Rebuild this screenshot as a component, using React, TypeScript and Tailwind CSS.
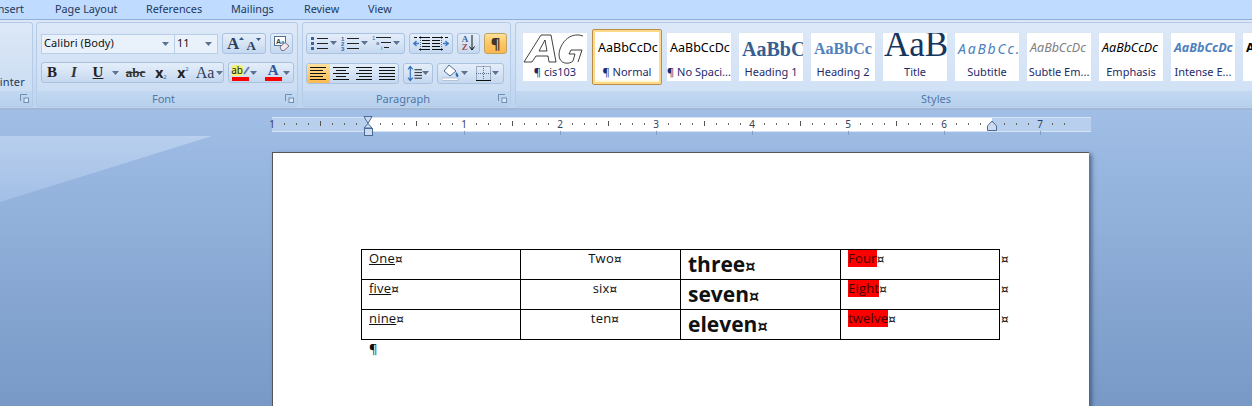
import React from "react";

const Caret = () => (
  <svg width="7" height="4" viewBox="0 0 7 4" className="shrink-0"><path d="M0 0h7L3.500 4z" fill="#5c7290" /></svg>
);

const Launcher = () => (
  <svg width="9" height="9" viewBox="0 0 9 9" className="shrink-0">
    <path d="M0.500 7V0.500H7" fill="none" stroke="#6f8db3" />
    <rect x="4" y="4" width="4.500" height="4.500" fill="#dfe9f6" stroke="#6f8db3" />
  </svg>
);

function Group({ label, width, className, children }: { label: string; width: string; className?: string; children?: React.ReactNode }) {
  return (
    <div className={`${width} ${className ?? ""} h-[85px] shrink-0 flex flex-col rounded-[3px] border border-[#b5cbe6] bg-gradient-to-b from-[#dce8f7] via-[#d3e2f5] to-[#c8dbf2] overflow-hidden`}>
      <div className="h-[68px] shrink-0">{children}</div>
      <div className="flex-1 flex items-center bg-gradient-to-b from-[#c2d8f1] to-[#b9d1ee] pl-[5px] pr-[3px]">
        <span className="flex-1 text-center text-[11px] leading-none text-[#4f78a8]">{label}</span>
        <Launcher />
      </div>
    </div>
  );
}

function BtnGroup({ width, children, className }: { width: string; children: React.ReactNode; className?: string }) {
  return (
    <div className={`${width} ${className ?? ""} h-[21px] flex items-center justify-between rounded-[3px] border border-[#a9c2e0] bg-gradient-to-b from-[#e4eefa] via-[#d6e4f5] to-[#c4d8f0] shrink-0`}>
      {children}
    </div>
  );
}

const Lines = ({ kind = "left", w = 16 }: { kind?: string; w?: number }) => {
  const rows = [2, 5, 8, 11, 14];
  const short = [0, 3, 0, 3, 0];
  return (
    <svg width={w} height="15" viewBox={`0 0 ${w} 15`} className="shrink-0">
      {rows.map((y, i) => {
        let a = 0, b = w;
        if (kind === "left") b = w - short[i];
        if (kind === "right") a = short[i];
        if (kind === "center") { a = short[i]; b = w - short[i]; }
        return <path key={y} d={`M${a} ${y - 0.5}H${b}`} stroke="#111" strokeWidth="1" />;
      })}
    </svg>
  );
};

const Bullets = () => (
  <svg width="17" height="15" viewBox="0 0 17 15">
    {[2, 7, 12].map((y) => (
      <g key={y}>
        <rect x="0" y={y - 1} width="3" height="3" fill="#3f63a0" />
        <path d={`M6 ${y + 0.5}H17`} stroke="#222" />
      </g>
    ))}
  </svg>
);

const Numbers = () => (
  <svg width="18" height="15" viewBox="0 0 18 15" className="ml-[2px]">
    {[["1", 5], ["2", 10], ["3", 15]].map(([n, y]) => (
      <g key={n as string}>
        <text x="0" y={y as number} fontSize="6" fontWeight="700" fill="#3f63a0" fontFamily="Liberation Sans">{n}</text>
        <path d={`M6 ${(y as number) - 2.500}H18`} stroke="#222" />
      </g>
    ))}
  </svg>
);

const Multi = () => (
  <svg width="19" height="16" viewBox="0 0 19 16" className="ml-[2px]">
    <text x="0" y="5" fontSize="6" fill="#3f63a0" fontFamily="Liberation Sans">1</text>
    <path d="M4 2.500H19" stroke="#222" />
    <text x="4" y="10" fontSize="6" fill="#3f63a0" fontFamily="Liberation Sans">a</text>
    <path d="M9 7.500H19" stroke="#222" />
    <text x="9" y="15" fontSize="6" fill="#3f63a0" fontFamily="Liberation Sans">i</text>
    <path d="M12 12.500H17" stroke="#222" />
  </svg>
);

const Indent = ({ flip }: { flip?: boolean }) => (
  <svg width="17" height="15" viewBox="0 0 17 15" style={flip ? { transform: "scaleX(-1)" } : undefined}>
    <path d="M1 1.500H4M6 1.500H17M9 4.500H17M9 7.500H17M9 10.500H17M6 13.500H17" stroke="#111" />
    <path d="M7.500 0V15" stroke="#5e708a" strokeDasharray="1 1" />
    <path d="M0 7.500H6M3.500 5L1 7.500L3.500 10" fill="none" stroke="#3f78c4" strokeWidth="1.400" />
  </svg>
);

const TextLabel = ({ c, children }: { c: string; children: React.ReactNode }) => (
  <span className={`font-['Liberation_Serif'] ${c}`}>{children}</span>
);

function FontGroup() {
  return (
    <Group label="Font" width="w-[262px]" className="ml-[3px]">
      <div className="flex flex-col pl-[4px] pt-[10px] gap-[8px]">
        <div className="flex items-center h-[21px]">
          <div className="w-[134px] h-[20px] flex items-center justify-between px-[2px] pr-[5px] bg-[#e9f1fb] border border-[#b9cfe9] text-[11px] tracking-[0.1px] text-[#111]">
            <span>Calibri (Body)</span>
            <Caret />
          </div>
          <div className="w-[43px] h-[20px] flex items-center justify-between pl-[2px] pr-[5px] bg-[#e9f1fb] border border-[#b9cfe9] border-l-0 text-[11px] text-[#111]">
            <span>11</span>
            <Caret />
          </div>
          <BtnGroup width="w-[44px] ml-[4px]" className="px-[4px]">
            <span className="flex items-start"><TextLabel c="text-[17px] leading-none font-bold text-[#2b3f5c]">A</TextLabel><svg width="5" height="3" viewBox="0 0 5 3" className="mt-[2px]"><path d="M0 3L2.500 0L5 3z" fill="#3b5a86" /></svg></span>
            <span className="flex items-start"><TextLabel c="text-[13px] leading-none font-bold text-[#2b3f5c] mt-[3px]">A</TextLabel><svg width="5" height="3" viewBox="0 0 5 3" className="mt-[2px]"><path d="M0 0L2.500 3L5 0z" fill="#3b5a86" /></svg></span>
          </BtnGroup>
          <BtnGroup width="w-[23px] ml-[4px]" className="justify-center">
            <svg width="17" height="17" viewBox="0 0 17 17">
              <rect x="1.500" y="1.500" width="11" height="9" fill="#fff" stroke="#55708f" />
              <text x="3" y="8.500" fontSize="7" fontWeight="700" fill="#2b3f5c" fontFamily="Liberation Sans">A</text>
              <text x="8" y="8.500" fontSize="6" fill="#2b3f5c" fontFamily="Liberation Sans">a</text>
              <path d="M7 12L12 7.500L16 11L11 15.500H8.500z" fill="#f2e8ee" stroke="#7b6f88" />
            </svg>
          </BtnGroup>
        </div>
        <div className="flex items-center h-[21px]">
          <BtnGroup width="w-[183px]" className="justify-start">
            <span className="w-[20px] flex justify-center"><TextLabel c="text-[15px] leading-none font-bold text-[#222]">B</TextLabel></span>
            <span className="w-[24px] flex justify-center"><TextLabel c="text-[15px] leading-none italic font-bold text-[#333]">I</TextLabel></span>
            <span className="w-[24px] flex justify-center"><TextLabel c="text-[15px] leading-none font-bold underline text-[#222]">U</TextLabel></span>
            <span className="w-[11px] flex justify-center"><Caret /></span>
            <span className="w-[29px] flex justify-center"><TextLabel c="text-[13px] leading-none font-bold line-through text-[#333]">abc</TextLabel></span>
            <span className="w-[22px] flex justify-center items-end"><span className="text-[14px] leading-none font-bold text-[#222]">x</span><span className="text-[6px] leading-none text-[#3f63a0]">2</span></span>
            <span className="w-[22px] flex justify-center items-start"><span className="text-[14px] leading-none font-bold text-[#222]">x</span><span className="text-[6px] leading-none text-[#3f63a0]">2</span></span>
            <span className="w-[22px] flex justify-center"><TextLabel c="text-[16px] leading-none text-[#2b3f5c]">Aa</TextLabel></span>
            <Caret />
          </BtnGroup>
          <BtnGroup width="w-[66px] ml-[4px]" className="px-[3px]">
            <span className="flex flex-col items-center w-[17px]">
              <span className="flex items-center h-[13px]">
                <span className="bg-[#f2f06e] text-[10px] leading-[11px] text-[#222] rounded-[3px]">ab</span>
                <svg width="7" height="10" viewBox="0 0 7 10"><path d="M1 8L6 1" stroke="#6a80a8" strokeWidth="2" /></svg>
              </span>
              <span className="w-[17px] h-[4px] bg-[#f00]" />
            </span>
            <Caret />
            <span className="flex flex-col items-center w-[17px] ml-[6px]">
              <TextLabel c="text-[15px] h-[13px] leading-[13px] font-bold text-[#2f5a9e]">A</TextLabel>
              <span className="w-[17px] h-[4px] bg-[#f00]" />
            </span>
            <Caret />
          </BtnGroup>
        </div>
      </div>
    </Group>
  );
}

function ParagraphGroup() {
  return (
    <Group label="Paragraph" width="w-[209px]" className="ml-[4px]">
      <div className="flex flex-col pl-[3px] pt-[9px] gap-[8px]">
        <div className="flex items-center gap-[4px] h-[22px]">
          <BtnGroup width="w-[99px]" className="px-[4px]">
            <Bullets /><Caret /><Numbers /><Caret /><Multi /><Caret />
          </BtnGroup>
          <BtnGroup width="w-[44px]" className="px-[3px]">
            <Indent /><Indent flip />
          </BtnGroup>
          <BtnGroup width="w-[23px]" className="justify-center">
            <span className="flex flex-col font-['Liberation_Serif'] text-[9px] leading-[8px] font-bold">
              <span className="text-[#3f63a0]">A</span>
              <span className="text-[#a04a4a]">Z</span>
            </span>
            <svg width="6" height="16" viewBox="0 0 6 16" className="ml-[1px]"><path d="M3 0V15M0.500 11.500L3 15L5.500 11.500" fill="none" stroke="#111" /></svg>
          </BtnGroup>
          <div className="w-[23px] h-[21px] flex items-center justify-center rounded-[3px] border border-[#c2a25f] bg-gradient-to-b from-[#fde29b] via-[#fbc662] to-[#fdb84e] text-[15px] font-bold leading-none text-[#40362a]">¶</div>
        </div>
        <div className="flex items-center gap-[4px] h-[22px]">
          <BtnGroup width="w-[93px]" className="overflow-hidden">
            <span className="w-[23px] h-full flex items-center justify-center bg-gradient-to-b from-[#fde29b] to-[#fbb94f]"><Lines kind="left" /></span>
            <span className="w-[23px] flex justify-center"><Lines kind="center" /></span>
            <span className="w-[23px] flex justify-center"><Lines kind="right" /></span>
            <span className="w-[23px] flex justify-center"><Lines kind="both" /></span>
          </BtnGroup>
          <BtnGroup width="w-[30px]" className="px-[3px]">
            <svg width="16" height="17" viewBox="0 0 16 17">
              <path d="M3.500 1V16M1 4L3.500 1L6 4M1 13L3.500 16L6 13" fill="none" stroke="#2f6cb8" strokeWidth="1.200" />
              {[4.500, 7.500, 10.500, 13.500].map((y) => <path key={y} d={`M8 ${y}H16`} stroke="#222" />)}
            </svg>
            <Caret />
          </BtnGroup>
          <BtnGroup width="w-[67px]" className="px-[4px]">
            <svg width="18" height="18" viewBox="0 0 18 18">
              <path d="M7 1L14 7L8 12L2 7z" fill="#fff" stroke="#4c6a90" />
              <path d="M14 8c2 2 3 3 2 5c-2 0-3-2-2-5z" fill="#2f6cb8" />
              <rect x="0" y="14" width="16" height="2.500" fill="#fff" stroke="#9aa8bc" strokeWidth="0.600" />
            </svg>
            <Caret />
            <svg width="15" height="15" viewBox="0 0 15 15" className="ml-[6px]">
              <rect x="0.500" y="0.500" width="14" height="14" fill="none" stroke="#5e708a" strokeDasharray="1 1" />
              <path d="M7.500 0V15M0 7.500H15" stroke="#5e708a" strokeDasharray="1 1" />
              <path d="M0 14.500H15" stroke="#111" />
            </svg>
            <Caret />
          </BtnGroup>
        </div>
      </div>
    </Group>
  );
}

function StyleCard({ sample, label, sc, selected, ml }: { sample: string; label: string; sc: string; selected?: boolean; ml: string }) {
  return (
    <div className={`${ml} shrink-0 ${selected ? "w-[70px] h-[56px] border border-[#b98d45] bg-white rounded-[2px] shadow-[inset_0_0_0_2px_#fdd98a,inset_0_-3px_2px_#ffefb4]" : "w-[64px] h-[48px] bg-white"} flex flex-col items-center overflow-hidden`}>
      <div className={`w-full h-[32px] ${selected ? "mt-[3px] px-[5px] shrink-0" : "px-[1px] shrink-0"} flex items-center overflow-hidden whitespace-nowrap`}>
        <span className={sc}>{sample}</span>
      </div>
      <span className="text-[11px] leading-[13px] whitespace-nowrap text-[#1d2a6b]">{label}</span>
    </div>
  );
}

function StylesGroup() {
  const ca = "font-['Noto_Sans']";
  return (
    <div className="ml-[4px] w-[842px] h-[85px] shrink-0 flex flex-col rounded-l-[3px] border border-[#b5cbe6] bg-gradient-to-b from-[#dce8f7] to-[#cfe0f5] overflow-hidden">
      <div className="h-[68px] shrink-0 flex items-center pl-[7px] pb-[1px]">
        <div className="w-[64px] h-[48px] bg-white shrink-0 flex flex-col items-center overflow-hidden">
          <svg width="64" height="32" viewBox="0 0 64 32" className="shrink-0">
            <path d="M1 29L18 2H28L33 29H26L25 23H13L9 29zM16 18H24L22 7z" fill="#fff" stroke="#111" strokeWidth="0.800" />
            <path d="M60 3C46 -2 36 12 36 22C36 31 46 32 50 28L52 21H46L48 17H59L55 29" fill="#fff" stroke="#111" strokeWidth="0.800" />
          </svg>
          <span className="text-[11px] leading-[13px] whitespace-nowrap text-[#1d2a6b]">¶ cis103</span>
        </div>
        <StyleCard ml="ml-[5px]" selected sample="AaBbCcDc" label="¶ Normal" sc={`${ca} text-[12.5px] text-black`} />
        <StyleCard ml="ml-[5px]" sample="AaBbCcDc" label="¶ No Spaci..." sc={`${ca} text-[12.5px] text-black ml-[2px]`} />
        <StyleCard ml="ml-[8px]" sample="AaBbCc" label="Heading 1" sc="font-['Liberation_Serif'] font-bold text-[20px] text-[#365f91] ml-[2px]" />
        <StyleCard ml="ml-[8px]" sample="AaBbCc" label="Heading 2" sc="font-['Liberation_Serif'] font-bold text-[16px] text-[#4f81bd] ml-[2px]" />
        <StyleCard ml="ml-[8px]" sample="AaB" label="Title" sc="font-['Liberation_Serif'] text-[35px] text-[#17365d] -mt-[6px]" />
        <StyleCard ml="ml-[8px]" sample="AaBbCc." label="Subtitle" sc={`${ca} italic text-[14px] tracking-[1.8px] text-[#4f81bd] ml-[2px]`} />
        <StyleCard ml="ml-[8px]" sample="AaBbCcDc" label="Subtle Em..." sc={`${ca} italic text-[12.5px] text-[#808080] ml-[2px]`} />
        <StyleCard ml="ml-[8px]" sample="AaBbCcDc" label="Emphasis" sc={`${ca} italic text-[12.5px] text-black ml-[2px]`} />
        <StyleCard ml="ml-[8px]" sample="AaBbCcDc" label="Intense E..." sc={`${ca} italic font-bold text-[12.5px] text-[#4f81bd] ml-[2px]`} />
        <StyleCard ml="ml-[8px]" sample="AaBbCcDc" label="" sc={`${ca} font-bold text-[12.5px] text-black ml-[2px]`} />
      </div>
      <div className="flex-1 flex items-center justify-center bg-gradient-to-b from-[#c2d8f1] to-[#b9d1ee]">
        <span className="text-[11px] leading-none text-[#4f78a8]">Styles</span>
      </div>
    </div>
  );
}

function Ruler() {
  const ticks: React.ReactNode[] = [];
  for (let i = 0; i < 67; i++) {
    const x = 12 * i;
    if (x > 806) break;
    if (i % 8 === 0) continue;
    if (i % 4 === 0) ticks.push(<path key={i} d={`M${x + 0.500} 5V10`} stroke="#555" />);
    else ticks.push(<rect key={i} x={x} y="7" width="1" height="2" fill="#666" />);
  }
  const under: React.ReactNode[] = [];
  for (let k = 0; k < 7; k++) under.push(<path key={k} d={`M${192 + 96 * k + 0.500} 15V19`} stroke="#7f9cc6" />);
  const nums = [[0, "1"], [192, "1"], [288, "2"], [384, "3"], [480, "4"], [576, "5"], [672, "6"], [768, "7"]] as const;
  return (
    <div className="h-[26px] pt-[7px] pl-[272px] shrink-0">
      <div className="relative w-[819px] h-[15px] flex bg-[#b9cfee] border-y border-[#d6e3f5]">
        <div className="w-[96px] shrink-0" />
        <div className="w-[624px] shrink-0 bg-white" />
        <svg width="819" height="24" viewBox="0 0 819 24" className="absolute left-0 -top-[2px] overflow-visible">
          {ticks}
          {under}
          <path d="M92 0.500H100L96 7.500L100 12H92L96 7.500z" fill="#cfdcef" stroke="#4a6a98" />
          <rect x="92.500" y="12.500" width="8" height="7" fill="#cfdcef" stroke="#4a6a98" />
          <path d="M715.500 14.500V10L720 5L724.500 10V14.500z" fill="#cfdcef" stroke="#4a6a98" />
        </svg>
        {nums.map(([x, n], i) => (
          <span key={i} className="absolute top-0 h-[13px] w-[10px] -ml-[5px] text-center text-[10px] leading-[13px] text-[#33415c]" style={{ left: x }}>{n}</span>
        ))}
      </div>
    </div>
  );
}

const Mark = () => <span className="font-['DejaVu_Sans'] text-[12px] leading-none font-normal">¤</span>;

function Cell({ children, className }: { children: React.ReactNode; className?: string }) {
  return <td className={`border border-black h-[30px] p-0 pr-[7px] align-top ${className ?? "pl-[7px]"}`}>{children}</td>;
}

const Rows = [
  ["One", "Two", "three", "Four"],
  ["five", "six", "seven", "Eight"],
  ["nine", "ten", "eleven", "twelve"],
];

function DocTable() {
  return (
    <table className="table-fixed border-collapse w-[660px] text-[13px] tracking-[0.2px] leading-[17px] text-[#111] font-['Open_Sans']">
      <colgroup>
        <col className="w-[159px]" /><col className="w-[160px]" /><col className="w-[160px]" /><col className="w-[159px]" /><col className="w-[22px]" />
      </colgroup>
      <tbody>
        {Rows.map((r) => (
          <tr key={r[0]} className="h-[30px]">
            <Cell><span className="underline">{r[0]}</span><Mark /></Cell>
            <Cell className="text-center pl-[16px]"><span>{r[1]}</span><Mark /></Cell>
            <Cell className="pl-[7px] text-[21px] tracking-normal leading-[28px] font-bold"><span>{r[2]}</span><span className="font-['DejaVu_Sans'] text-[16px] leading-none font-bold">¤</span></Cell>
            <Cell><span className="bg-[#f00] inline-block h-[17px] text-[#400]">{r[3]}</span><Mark /></Cell>
            <td className="p-0 pl-[1px] align-top"><Mark /></td>
          </tr>
        ))}
      </tbody>
    </table>
  );
}

export default function App() {
  return (
    <div className="w-[1252px] h-[406px] overflow-hidden flex flex-col bg-[#bfdbff] font-['Noto_Sans',sans-serif]">
      <div className="h-[19px] shrink-0 flex items-center -ml-[6px] bg-[#bfdbff] text-[10.8px] leading-none text-[#1e395b] whitespace-nowrap">
        <span className="w-[61px]">Insert</span><span className="w-[91px]">Page Layout</span><span className="w-[85px]">References</span><span className="w-[73px]">Mailings</span><span className="w-[64px]">Review</span><span>View</span>
      </div>
      <div className="h-[91px] shrink-0 flex pt-[2px] bg-gradient-to-b from-[#dbe8f8] via-[#cde0f6] to-[#bcd4f0] border-t border-[#8fb0d8] border-b-2 border-b-[#a0b8d4]">
        <div className="w-[33px] h-[85px] shrink-0 flex flex-col rounded-r-[3px] border border-l-0 border-[#b5cbe6] bg-gradient-to-b from-[#dce8f7] to-[#c8dbf2] overflow-hidden">
          <div className="h-[68px] shrink-0 flex items-end justify-end pb-[4px] pr-[7px] text-[11px] tracking-[0.2px] leading-none text-[#1e395b]">inter</div>
          <div className="flex-1 flex items-center justify-end pr-[3px] bg-gradient-to-b from-[#c2d8f1] to-[#b9d1ee]"><Launcher /></div>
        </div>
        <FontGroup />
        <ParagraphGroup />
        <StylesGroup />
      </div>
      <div className="relative flex-1 flex flex-col bg-gradient-to-b from-[#a0bee6] to-[#7899c6] overflow-hidden">
        <svg width="214" height="68" viewBox="0 0 214 68" className="absolute left-0 top-[26px]">
          <defs>
            <linearGradient id="sw" x1="0" y1="0" x2="0" y2="1">
              <stop offset="0" stopColor="#b8cfee" />
              <stop offset="1" stopColor="#a3bfe6" />
            </linearGradient>
          </defs>
          <path d="M0 0H212L0 66z" fill="url(#sw)" />
        </svg>
        <Ruler />
        <div className="relative flex-1 ml-[272px] mt-[16px] w-[817px] bg-white border-l border-t border-[#555] shadow-[3px_2px_4px_rgba(40,60,100,0.6)] pt-[96px] pl-[88px]">
          <DocTable />
          <div className="pl-[8px] text-[13px] leading-[18px] font-['Open_Sans'] text-[#111]">¶</div>
        </div>
      </div>
    </div>
  );
}
